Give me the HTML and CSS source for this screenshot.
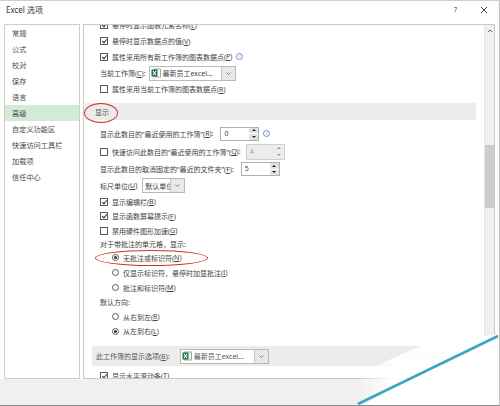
FILE: index.html
```html
<!DOCTYPE HTML>
<html>
    <head>
        <meta charset="UTF-8">
        <title>Excel 选项</title>
        <link rel="stylesheet" href="styles.css">
    </head>
    <body>
        <div class="dlg">
            <div class="titlebar">
                <p class="title">Excel 选项</p>
                <span class="help">?</span>
                <svg class="close" width="8" height="8" viewBox="0 0 8 8"><path d="M1 1L7 7M7 1L1 7" stroke="#444" stroke-width="1"/></svg>
            </div>
            <div class="main">
                <ul class="nav">
                    <li>常规</li>
                    <li>公式</li>
                    <li>校对</li>
                    <li>保存</li>
                    <li>语言</li>
                    <li class="on">高级</li>
                    <li>自定义功能区</li>
                    <li>快速访问工具栏</li>
                    <li>加载项</li>
                    <li>信任中心</li>
                </ul>
                <div class="panel">
                    <div class="scroll">
                        <div class="rows">
                            <div class="row h16"><i class="cb on"></i>悬停时显示图表元素名称(<u>L</u>)</div>
                            <div class="row h16"><i class="cb on"></i>悬停时显示数据点的值(<u>V</u>)</div>
                            <div class="row"><i class="cb on"></i>属性采用所有新工作簿的图表数据点(<u>P</u>)<i class="info">i</i></div>
                            <div class="row h18">当前工作簿(<u>C</u>):
                                <div class="dd wide">
                                    <svg class="xl" width="10" height="10" viewBox="0 0 10 10"><rect x="3" y="1" width="6.5" height="8" fill="#fff" stroke="#6aa47f" stroke-width=".8"/><rect x="0.5" y="1.5" width="6" height="7" fill="#1e7145"/><path d="M2 3L5 7M5 3L2 7" stroke="#fff" stroke-width="1.1"/></svg>
                                    <span class="val">最新员工excel...</span>
                                    <span class="arr"><svg width="5" height="3" viewBox="0 0 5 3"><path d="M.5 .5L2.5 2.5L4.5 .5" fill="none" stroke="#666" stroke-width=".8"/></svg></span>
                                </div>
                            </div>
                            <div class="row h14"><i class="cb"></i>属性采用当前工作簿的图表数据点(<u>R</u>)</div>

                            <div class="band">显示</div>

                            <div class="row h17 gap5">显示此数目的“最近使用的工作簿”(<u>R</u>):
                                <div class="spin"><span class="v">0</span><span class="btns"><i class="up"></i><i class="dn"></i></span></div>
                                <i class="info">i</i>
                            </div>
                            <div class="row h19"><i class="cb"></i>快速访问此数目的“最近使用的工作簿”(<u>Q</u>):
                                <div class="spin off"><span class="v">4</span><span class="btns"><i class="up"></i><i class="dn"></i></span></div>
                            </div>
                            <div class="row h16">显示此数目的取消固定的“最近的文件夹”(<u>F</u>):
                                <div class="spin"><span class="v">5</span><span class="btns"><i class="up"></i><i class="dn"></i></span></div>
                            </div>
                            <div class="row h17">标尺单位(<u>U</u>)
                                <div class="dd unit">
                                    <span class="val">默认单位</span>
                                    <span class="arr"><svg width="5" height="3" viewBox="0 0 5 3"><path d="M.5 .5L2.5 2.5L4.5 .5" fill="none" stroke="#666" stroke-width=".8"/></svg></span>
                                </div>
                            </div>
                            <div class="row"><i class="cb on"></i>显示编辑栏(<u>B</u>)</div>
                            <div class="row h14"><i class="cb on"></i>显示函数屏幕提示(<u>F</u>)</div>
                            <div class="row"><i class="cb"></i>禁用硬件图形加速(<u>G</u>)</div>
                            <div class="row h12">对于带批注的单元格，显示:</div>
                            <div class="row sub"><i class="rb on"></i>无批注或标识符(<u>N</u>)</div>
                            <div class="row sub"><i class="rb"></i>仅显示标识符，悬停时加显批注(<u>I</u>)</div>
                            <div class="row sub"><i class="rb"></i>批注和标识符(<u>M</u>)</div>
                            <div class="row h14">默认方向:</div>
                            <div class="row sub"><i class="rb"></i>从右到左(<u>R</u>)</div>
                            <div class="row sub h14"><i class="rb on"></i>从左到右(<u>L</u>)</div>

                            <div class="band book">此工作簿的显示选项(<u>B</u>):
                                <div class="dd wide">
                                    <svg class="xl" width="10" height="10" viewBox="0 0 10 10"><rect x="3" y="1" width="6.5" height="8" fill="#fff" stroke="#6aa47f" stroke-width=".8"/><rect x="0.5" y="1.5" width="6" height="7" fill="#1e7145"/><path d="M2 3L5 7M5 3L2 7" stroke="#fff" stroke-width="1.1"/></svg>
                                    <span class="val">最新员工excel...</span>
                                    <span class="arr"><svg width="5" height="3" viewBox="0 0 5 3"><path d="M.5 .5L2.5 2.5L4.5 .5" fill="none" stroke="#666" stroke-width=".8"/></svg></span>
                                </div>
                            </div>
                            <div class="row last"><i class="cb on"></i>显示水平滚动条(<u>T</u>)</div>
                        </div>
                    </div>
                    <div class="sbar">
                        <svg class="sup" width="6" height="4" viewBox="0 0 6 4"><path d="M1 3L3 1L5 3" fill="none" stroke="#555" stroke-width=".9"/></svg>
                        <div class="thumb"></div>
                    </div>
                </div>
            </div>
            <div class="foot"></div>

            <!-- 红圈标注 -->
            <div class="ring ring1"></div>
            <div class="ring ring2"></div>

            <!-- 右下角卷角水印 -->
            <svg class="curl" width="500" height="406" viewBox="0 0 500 406">
                <defs>
                    <linearGradient id="fade" x1="0" y1="0" x2="1" y2="0">
                        <stop offset="0" stop-color="#fff" stop-opacity="0"/>
                        <stop offset=".25" stop-color="#fff" stop-opacity=".95"/>
                        <stop offset="1" stop-color="#fff"/>
                    </linearGradient>
                </defs>
                <polygon points="425,344 500,334 500,406 356,406 362,372" fill="url(#fade)"/>
                <polygon points="500,337 500,406 360,406" fill="#fff"/>
                <path d="M358 404L498 336" stroke="#3aa3c6" stroke-width="2.6"/>
            </svg>
        </div>
    </body>
</html>
```

FILE: styles.css
```css
body{margin:0;font-family:"Noto Sans","Noto Sans CJK SC",sans-serif;font-size:7px;color:#3e3e3e;}
p,ul,li{margin:0;padding:0;list-style:none;}
u{text-decoration:underline;}
i{font-style:normal;}

.dlg{
    position: relative;
    width: 500px;
    height: 406px;
    box-sizing: border-box;
    display: flex;
    flex-direction: column;
    overflow: hidden;
    background: #fff;
    border-top: 1px solid #cfcfcf;
    border-right: 1px solid #c0c0c0;
    border-bottom: 1px solid #8e8e8e;
}

/* 标题栏 */
.titlebar{
    height: 23px;
    flex: none;
    display: flex;
    align-items: flex-start;
    padding: 4px 0 0 6px;
    box-sizing: border-box;
}
.titlebar .title{
    font-size: 8px;
    line-height: 10px;
    color: #333;
}
.titlebar .help{
    margin-left: auto;
    font-size: 7px;
    line-height: 10px;
    color: #444;
}
.titlebar .close{
    margin: 1px 11px 0 23px;
}

/* 主体 */
.main{
    display: flex;
    gap: 3px;
    height: 355px;
    flex: none;
    padding: 0 4px;
}
.nav{
    width: 76px;
    box-sizing: border-box;
    border: 1px solid #cdcdcd;
}
.nav li{
    height: 16px;
    line-height: 16px;
    padding-left: 7px;
    color: #4a4a4a;
    font-size: 7.2px;
}
.nav li.on{
    background: #d2ebd9;
}
.panel{
    flex: 1;
    display: flex;
    border: 1px solid #c8c8c8;
    overflow: hidden;
}
.scroll{
    position: relative;
    flex: 1;
    overflow: hidden;
}
.rows{
    margin-top: -8px;
}

/* 行 */
.row{
    display: flex;
    align-items: center;
    height: 15px;
    padding-left: 16px;
    white-space: nowrap;
}
.row.sub{padding-left: 28px;}
.row.h12{height: 12px;}
.row.h14{height: 14px;}
.row.h16{height: 16px;}
.row.h17{height: 17px;}
.row.h18{height: 18px;}
.row.h19{height: 19px;}
.row.gap5{margin-top: 5px;}
.row.last{margin-top: 2px;}

.cb{
    position: relative;
    flex: none;
    width: 8px;
    height: 8px;
    box-sizing: border-box;
    border: 1px solid #5a5a5a;
    margin-right: 4px;
}
.cb.on::after{
    content: "";
    position: absolute;
    left: 2px;
    top: 0;
    width: 2px;
    height: 4px;
    border: solid #333;
    border-width: 0 1px 1px 0;
    transform: rotate(40deg);
}
.rb{
    position: relative;
    flex: none;
    width: 7px;
    height: 7px;
    box-sizing: border-box;
    border: 1px solid #5a5a5a;
    border-radius: 50%;
    margin-right: 4px;
}
.rb.on::after{
    content: "";
    position: absolute;
    left: 1px;
    top: 1px;
    width: 3px;
    height: 3px;
    border-radius: 50%;
    background: #333;
}
.info{
    flex: none;
    width: 7px;
    height: 7px;
    box-sizing: border-box;
    border: 1px solid #6a8fd8;
    border-radius: 50%;
    margin-left: 4px;
    color: #6a8fd8;
    font-size: 5px;
    line-height: 5px;
    text-align: center;
}

/* 分组标题 */
.band{
    display: flex;
    align-items: center;
    height: 17px;
    margin: 7px 8px 0 1px;
    padding-left: 10px;
    background: #ececec;
    color: #555;
}
.band.book{
    height: 20px;
    margin: 8px 8px 0 8px;
    padding-left: 4px;
}

/* 下拉框 */
.dd{
    display: flex;
    align-items: center;
    height: 15px;
    box-sizing: border-box;
    border: 1px solid #b9b9b9;
    background: #fff;
    margin-left: 3px;
}
.dd.wide{width: 87px;}
.dd.unit{width: 43px;margin-left: 5px;}
.band .dd{margin-left: 10px;width: 89px;}
.dd .xl{flex: none;margin-left: 1px;}
.dd .val{
    flex: 1;
    padding-left: 2px;
    overflow: hidden;
}
.dd .arr{
    flex: none;
    width: 13px;
    height: 100%;
    display: flex;
    align-items: center;
    justify-content: center;
    background: #e8e8e8;
    border-left: 1px solid #c4c4c4;
}

/* 数字框 */
.spin{
    display: flex;
    width: 39px;
    height: 14px;
    box-sizing: border-box;
    border: 1px solid #b0b0b0;
    margin-left: 7px;
    background: #fff;
}
.spin .v{
    flex: 1;
    padding-left: 3px;
    line-height: 12px;
}
.spin .btns{
    width: 9px;
    display: flex;
    flex-direction: column;
    gap: 1px;
    padding: 0 0 0 1px;
}
.spin .btns i{
    flex: 1;
    display: flex;
    align-items: center;
    justify-content: center;
    background: #e2e2e2;
}
.spin .up::before{
    content: "";
    border: 2px solid transparent;
    border-bottom: 2px solid #222;
    border-top: 0;
}
.spin .dn::before{
    content: "";
    border: 2px solid transparent;
    border-top: 2px solid #222;
    border-bottom: 0;
}
.spin.off{
    height: 16px;
    margin-left: 5px;
    background: #ececec;
    border-color: #d0d0d0;
    color: #9a9a9a;
}
.spin.off .v{line-height: 14px;}
.spin.off .btns i{background: #ececec;}
.spin.off .up::before{border-bottom-color: #999;}
.spin.off .dn::before{border-top-color: #999;}

/* 滚动条 */
.sbar{
    flex: none;
    width: 9px;
    display: flex;
    flex-direction: column;
    align-items: center;
    background: #f0f0f0;
    border-left: 1px solid #e4e4e4;
}
.sbar .sup{margin-top: 4px;}
.sbar .thumb{
    width: 100%;
    height: 63px;
    margin-top: 112px;
    background: #cdcdcd;
}

.foot{
    flex: 1;
    background: #f0f0f0;
}

/* 红圈 */
.ring{
    position: absolute;
    border: 1.3px solid #d2302c;
    border-radius: 50%;
    box-sizing: border-box;
}
.ring1{left: 84px;top: 102px;width: 34px;height: 20px;}
.ring2{left: 95px;top: 249px;width: 113px;height: 16px;}

.curl{
    position: absolute;
    left: 0;
    top: -1px;
    pointer-events: none;
}
```
